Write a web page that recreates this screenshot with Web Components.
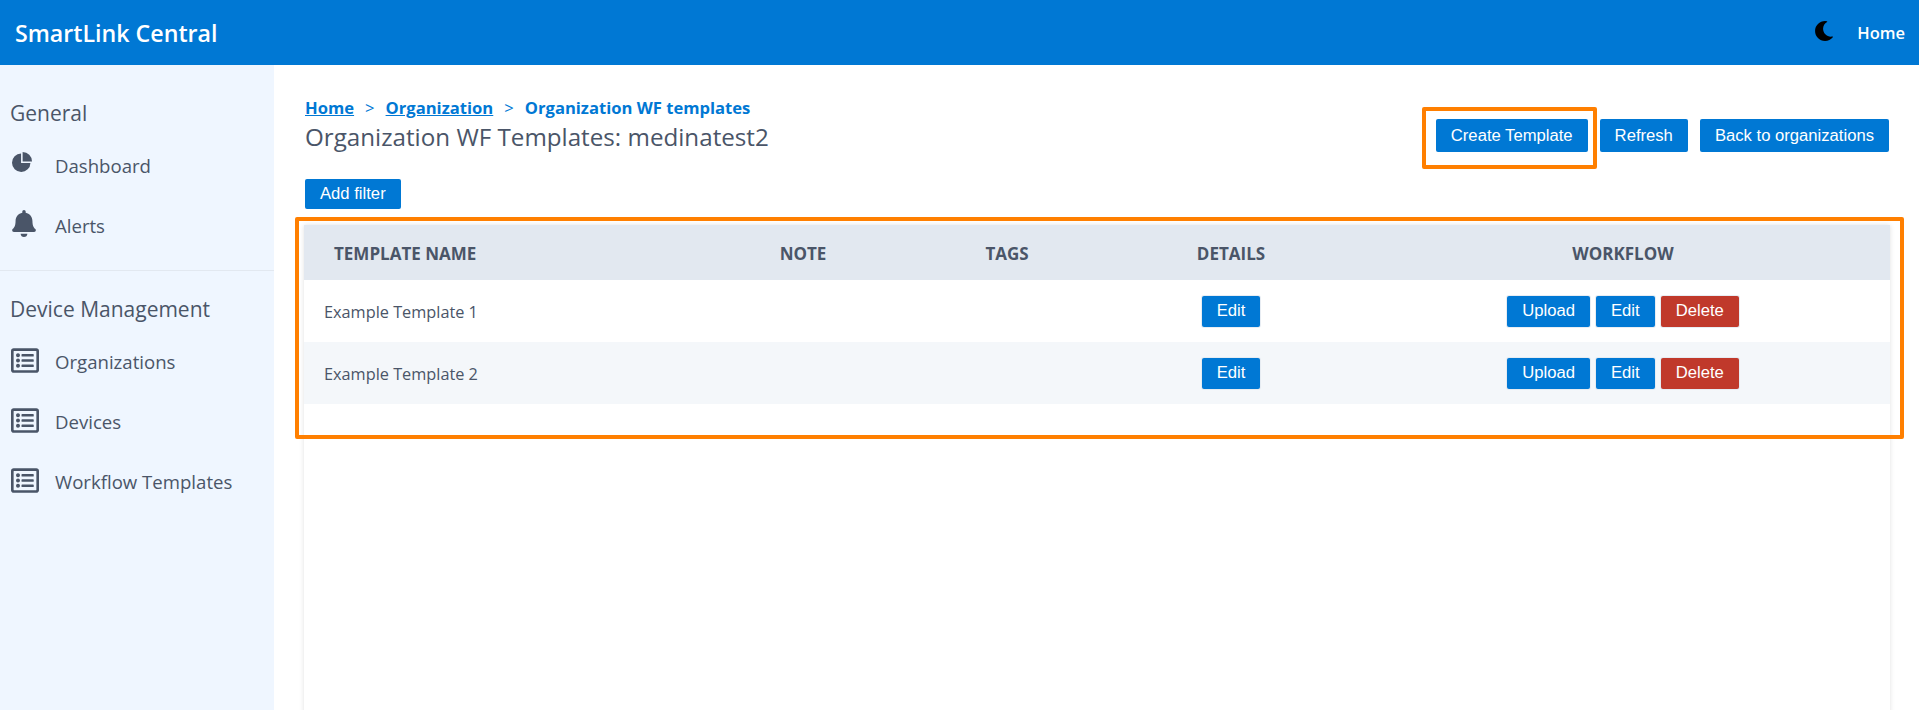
<!DOCTYPE html>
<html>
<head>
<meta charset="utf-8">
<title>SmartLink Central</title>
<style>
    html, body { margin: 0; height: 100%; overflow: hidden; background: #fff; }
    body { font-family: "Open Sans", "Noto Sans", sans-serif; color: #4a5568; }
</style>
</head>
<body>
<app-shell>
    <top-bar slot="top"></top-bar>
    <side-menu slot="side"></side-menu>
    <template-page slot="main"></template-page>
</app-shell>

<script>
(function () {

    const ICONS = {
        pie: '<svg viewBox="0 0 512 512" width="20" height="20"><path fill="currentColor" d="M232 40A236 236 0 1 0 472 280H232zM272 0A240 240 0 0 1 512 240H272z"/></svg>',
        bell: '<svg viewBox="0 0 448 512" width="24" height="27"><path fill="currentColor" d="M224 512c35.32 0 63.97-28.65 63.97-64H160.03c0 35.35 28.65 64 63.97 64zm215.39-149.71c-19.32-20.76-55.47-51.99-55.47-154.29 0-77.7-54.48-139.9-127.94-155.16V32c0-17.67-14.32-32-31.98-32s-31.98 14.33-31.98 32v20.84C118.56 68.1 64.08 130.3 64.08 208c0 102.3-36.15 133.53-55.47 154.29-6 6.45-8.66 14.16-8.61 21.71.11 16.4 12.98 32 32.1 32h383.8c19.12 0 32-15.6 32.1-32 .05-7.55-2.61-15.27-8.61-21.71z"/></svg>',
        list: '<svg viewBox="0 32 512 448" width="28" height="25" style="margin-left:-1px"><path fill="currentColor" d="M464 32H48C21.49 32 0 53.49 0 80v352c0 26.51 21.49 48 48 48h416c26.51 0 48-21.49 48-48V80c0-26.51-21.49-48-48-48zm-6 400H54a6 6 0 0 1-6-6V86a6 6 0 0 1 6-6h404a6 6 0 0 1 6 6v340a6 6 0 0 1-6 6zm-42-92v24c0 6.627-5.373 12-12 12H204c-6.627 0-12-5.373-12-12v-24c0-6.627 5.373-12 12-12h200c6.627 0 12 5.373 12 12zm0-96v24c0 6.627-5.373 12-12 12H204c-6.627 0-12-5.373-12-12v-24c0-6.627 5.373-12 12-12h200c6.627 0 12 5.373 12 12zm0-96v24c0 6.627-5.373 12-12 12H204c-6.627 0-12-5.373-12-12v-24c0-6.627 5.373-12 12-12h200c6.627 0 12 5.373 12 12zm-252 12c0 19.882-16.118 36-36 36s-36-16.118-36-36 16.118-36 36-36 36 16.118 36 36zm0 96c0 19.882-16.118 36-36 36s-36-16.118-36-36 16.118-36 36-36 36 16.118 36 36zm0 96c0 19.882-16.118 36-36 36s-36-16.118-36-36 16.118-36 36-36 36 16.118 36 36z"/></svg>',
        moon: '<svg viewBox="0 0 512 512" width="20" height="20"><path fill="#000" d="M283.211 512c78.962 0 151.079-35.925 198.857-94.792 7.068-8.708-.639-21.43-11.562-19.35-124.203 23.654-238.262-71.576-238.262-196.954 0-72.222 38.662-138.635 101.498-174.394 9.686-5.512 7.25-20.197-3.756-22.23A258.156 258.156 0 0 0 283.211 0c-141.309 0-256 114.511-256 256 0 141.309 114.511 256 256 256z"/></svg>'
    };
    // icons sit a little above the text line, each by its own amount
    const ICON_LIFT = { pie: -6, bell: -3, list: -1 };

    function shadow(el, html) {
        el.attachShadow({ mode: 'open' });
        el.shadowRoot.innerHTML = html;
    }

    class AppShell extends HTMLElement {
        constructor() {
            super();
            shadow(this, `
                <style>
                    :host { display: flex; flex-direction: column; height: 710px; overflow: hidden; }
                    .body { display: flex; flex: 1; min-height: 0; }
                </style>
                <slot name="top"></slot>
                <div class="body">
                    <slot name="side"></slot>
                    <slot name="main"></slot>
                </div>
            `);
        }
    }

    class TopBar extends HTMLElement {
        constructor() {
            super();
            shadow(this, `
                <style>
                    :host {
                        display: flex;
                        align-items: center;
                        height: 65px;
                        flex: none;
                        padding: 0 14px 0 15px;
                        background: #0078d4;
                        color: #fff;
                    }
                    .brand { font-size: 23.2px; font-weight: 600; }
                    .moon { margin-left: auto; display: flex; margin-top: -4px; }
                    .home { margin-left: 23px; font-size: 16.5px; font-weight: 600; }
                </style>
                <span class="brand">SmartLink Central</span>
                <span class="moon">${ICONS.moon}</span>
                <span class="home">Home</span>
            `);
        }
    }

    class NavItem extends HTMLElement {
        constructor() {
            super();
            const icon = this.getAttribute('icon');
            shadow(this, `
                <style>
                    :host {
                        display: flex;
                        align-items: center;
                        height: 60px;
                        font-size: 18.6px;
                        color: #4a5568;
                    }
                    .icon { width: 55px; padding-left: 12px; box-sizing: border-box; display: flex; flex: none; }
                </style>
                <span class="icon" style="margin-top: ${ICON_LIFT[icon]}px">${ICONS[icon]}</span>
                <slot></slot>
            `);
        }
    }

    class SideMenu extends HTMLElement {
        constructor() {
            super();
            shadow(this, `
                <style>
                    :host {
                        display: block;
                        width: 274px;
                        flex: none;
                        box-sizing: border-box;
                        background: #eff6ff;
                        padding-top: 31px;
                    }
                    h3 { margin: 0 0 5px; padding-left: 10px; font-size: 21px; font-weight: 400; line-height: 34px; color: #4a5568; }
                    hr { border: 0; border-top: 1px solid #e2e8f0; margin: 15px 0 21px; }
                </style>
                <h3>General</h3>
                <nav-item icon="pie">Dashboard</nav-item>
                <nav-item icon="bell">Alerts</nav-item>
                <hr>
                <h3>Device Management</h3>
                <nav-item icon="list">Organizations</nav-item>
                <nav-item icon="list">Devices</nav-item>
                <nav-item icon="list">Workflow Templates</nav-item>
            `);
        }
    }

    class UiButton extends HTMLElement {
        constructor() {
            super();
            shadow(this, `
                <style>
                    :host {
                        display: inline-flex;
                        align-items: center;
                        justify-content: center;
                        box-sizing: border-box;
                        height: 33px;
                        padding: 0 15px;
                        border-radius: 2px;
                        background: #0078d4;
                        color: #fff;
                        font-family: "Liberation Sans", Arial, sans-serif;
                        font-size: 16.65px;
                    }
                    :host([small]) { height: 31px; box-shadow: 0 0 0 1px rgba(226, 232, 240, 0.8); }
                    :host([danger]) { background: #c0392b; }
                </style>
                <slot></slot>
            `);
        }
    }

    class TemplateTable extends HTMLElement {
        constructor() {
            super();
            const rows = ['Example Template 1', 'Example Template 2'].map(name => `
                <tr>
                    <td class="name">${name}</td>
                    <td></td>
                    <td></td>
                    <td class="mid"><ui-button small>Edit</ui-button></td>
                    <td class="mid actions">
                        <ui-button small>Upload</ui-button><ui-button small>Edit</ui-button><ui-button small danger>Delete</ui-button>
                    </td>
                </tr>`).join('');
            shadow(this, `
                <style>
                    :host {
                        display: block;
                        height: 500px;
                        box-shadow: 0 0 5px rgba(0, 0, 0, 0.12);
                    }
                    table { width: 100%; table-layout: fixed; border-collapse: collapse; font-size: 16.3px; color: #4a5568; }
                    th { height: 55px; padding: 2px 0 0; box-sizing: border-box; background: #e2e8f0; font-size: 17px; font-weight: 700; text-align: center; }
                    th:first-child { text-align: left; padding-left: 30px; }
                    td { height: 62px; padding: 0; }
                    tbody tr:nth-child(even) { background: #f4f7fa; }
                    td.name { padding: 2px 0 0 20px; box-sizing: border-box; }
                    .mid { text-align: center; }
                    .actions ui-button + ui-button { margin-left: 6px; }
                </style>
                <table>
                    <colgroup>
                        <col style="width: 394px"><col style="width: 210px"><col style="width: 198px"><col style="width: 250px"><col>
                    </colgroup>
                    <thead>
                        <tr><th>TEMPLATE NAME</th><th>NOTE</th><th>TAGS</th><th>DETAILS</th><th>WORKFLOW</th></tr>
                    </thead>
                    <tbody>${rows}</tbody>
                </table>
            `);
        }
    }

    class MarkBox extends HTMLElement {
        constructor() {
            super();
            shadow(this, `
                <style>
                    :host {
                        position: absolute;
                        box-sizing: border-box;
                        border: 4px solid #ff7f00;
                        border-radius: 2px;
                        pointer-events: none;
                    }
                </style>
            `);
        }
    }

    class TemplatePage extends HTMLElement {
        constructor() {
            super();
            shadow(this, `
                <style>
                    :host {
                        display: block;
                        position: relative;
                        flex: 1;
                        min-width: 0;
                        box-sizing: border-box;
                        padding: 32px 29px 0 30px;
                        background: #fff;
                    }
                    .head { display: flex; justify-content: space-between; align-items: flex-start; padding-left: 1px; }
                    .crumbs { font-size: 16.6px; font-weight: 700; line-height: 22px; color: #0078d4; }
                    .crumbs a { color: inherit; }
                    .crumbs i { font-style: normal; margin: 0 11px; font-weight: 400; }
                    h1 { margin: 0; font-size: 24.2px; font-weight: 500; line-height: 36px; color: #4a5568; }
                    .buttons { display: flex; gap: 12px; margin-top: 22px; margin-right: 1px; }
                    .filter { display: block; margin-top: 24px; margin-bottom: 16px; padding-left: 1px; }
                    ui-button.f { height: 30px; }
                    .box-create { left: 1148px; top: 42px; width: 175px; height: 62px; }
                    .box-table { left: 21px; top: 152px; width: 1609px; height: 222px; }
                </style>
                <div class="head">
                    <div>
                        <div class="crumbs"><a href="#">Home</a><i>&gt;</i><a href="#">Organization</a><i>&gt;</i><span>Organization WF templates</span></div>
                        <h1>Organization WF Templates: medinatest2</h1>
                    </div>
                    <div class="buttons">
                        <ui-button>Create Template</ui-button>
                        <ui-button>Refresh</ui-button>
                        <ui-button>Back to organizations</ui-button>
                    </div>
                </div>
                <div class="filter"><ui-button class="f">Add filter</ui-button></div>
                <template-table></template-table>
                <mark-box class="box-create"></mark-box>
                <mark-box class="box-table"></mark-box>
            `);
        }
    }

    customElements.define('ui-button', UiButton);
    customElements.define('nav-item', NavItem);
    customElements.define('top-bar', TopBar);
    customElements.define('side-menu', SideMenu);
    customElements.define('template-table', TemplateTable);
    customElements.define('mark-box', MarkBox);
    customElements.define('template-page', TemplatePage);
    customElements.define('app-shell', AppShell);

})();
</script>
</body>
</html>
